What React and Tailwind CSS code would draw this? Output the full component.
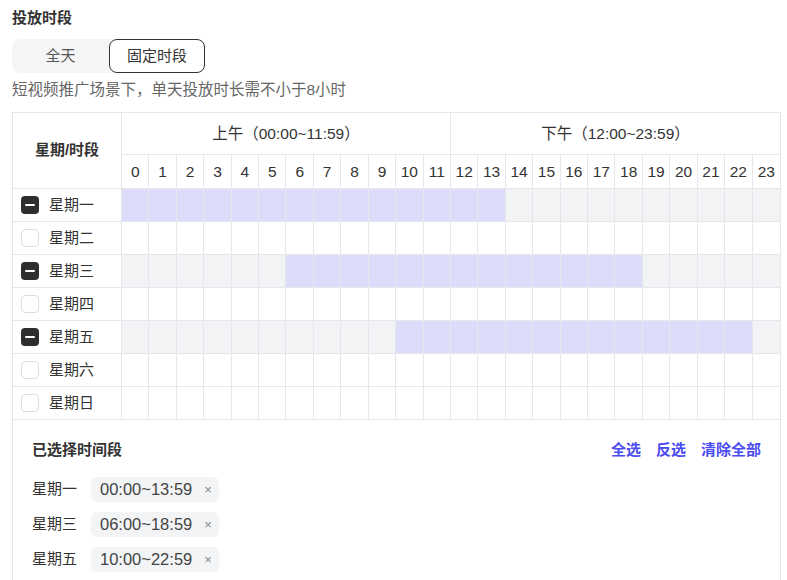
import React from 'react';

const DAYS = ['星期一', '星期二', '星期三', '星期四', '星期五', '星期六', '星期日'];
// selected hour range per day: [start, end] inclusive
const RANGES = { 0: [0, 13], 2: [6, 18], 4: [10, 22] };
const HOURS = Array.from({ length: 24 }, (_, i) => i);

const pad = (n) => String(n).padStart(2, '0');

function Check({ on }) {
  if (on) {
    return (
      <span className="w-[18px] h-[18px] rounded-[4px] bg-[#2e2e2e] flex items-center justify-center">
        <span className="w-[10px] h-[2px] bg-white rounded-full" />
      </span>
    );
  }
  return <span className="w-[18px] h-[18px] rounded-[4px] border border-[#dcdee3] bg-white" />;
}

export default function App() {
  return (
    <div
      className="pl-[12px] pt-[8px] text-[#333] text-[15px]"
      style={{ fontFamily: '"Liberation Sans", "Noto Sans CJK SC", sans-serif' }}
    >
      <div className="font-bold leading-[20px]">投放时段</div>

      <div className="mt-[11px] flex w-[193px] h-[34px] rounded-[8px] bg-[#f5f5f6]">
        <div className="w-[97px] flex items-center justify-center text-[#555]">全天</div>
        <div className="w-[96px] flex items-center justify-center bg-white border border-[#333] rounded-[8px]">固定时段</div>
      </div>

      <div className="mt-[7px] leading-[20px] text-[#666] text-[15.5px]">短视频推广场景下，单天投放时长需不小于8小时</div>

      <div className="mt-[12px] w-[769px] border-l border-t border-r border-[#e6e7eb]">
        <div className="grid grid-cols-[109px_repeat(24,1fr)] grid-rows-[42px_34px]">
          <div className="row-span-2 border-r border-b border-[#e6e7eb] flex items-center justify-center font-bold">星期/时段</div>
          <div className="col-span-12 border-r border-b border-[#e6e7eb] flex items-center justify-center text-[15.5px]">上午（00:00~11:59）</div>
          <div className="col-span-12 border-b border-[#e6e7eb] flex items-center justify-center text-[15.5px]">下午（12:00~23:59）</div>
          {HOURS.map((h) => (
            <div
              key={h}
              className={`border-b border-[#e6e7eb] flex items-center justify-center text-[15.5px] ${h < 23 ? 'border-r' : ''}`}
            >
              {h}
            </div>
          ))}
          {DAYS.map((d, i) => {
            const r = RANGES[i];
            return (
              <React.Fragment key={d}>
                <div className="h-[33px] border-r border-b border-[#e6e7eb] flex items-center gap-[10px] pl-[8px]">
                  <Check on={!!r} />
                  <span>{d}</span>
                </div>
                {HOURS.map((h) => {
                  const sel = r && h >= r[0] && h <= r[1];
                  return (
                    <div
                      key={h}
                      className={`h-[33px] border-b border-[#e6e7eb] ${h < 23 ? 'border-r' : ''} ${sel ? 'bg-[#dddcfb]' : r ? 'bg-[#f2f3f5]' : 'bg-white'}`}
                    />
                  );
                })}
              </React.Fragment>
            );
          })}
        </div>

        <div className="px-[19px] pt-[19px] pb-[20px]">
          <div className="flex items-center justify-between leading-[22px]">
            <span className="font-bold">已选择时间段</span>
            <div className="flex gap-[15px] font-bold text-[#4b4bf2]">
              <span>全选</span>
              <span>反选</span>
              <span>清除全部</span>
            </div>
          </div>
          <div className="mt-[16px] flex flex-col gap-[10px]">
            {Object.entries(RANGES).map(([i, [s, e]]) => (
              <div key={i} className="flex items-center">
                <span className="w-[59px]">{DAYS[i]}</span>
                <span className="h-[25px] w-[128px] rounded-[6px] bg-[#f2f4f6] flex items-center pl-[9px] text-[#444]">
                  <span className="text-[16.5px]">{pad(s)}:00~{pad(e)}:59</span>
                  <span className="ml-[12px] text-[#888] text-[13px]">×</span>
                </span>
              </div>
            ))}
          </div>
        </div>
      </div>
    </div>
  );
}
